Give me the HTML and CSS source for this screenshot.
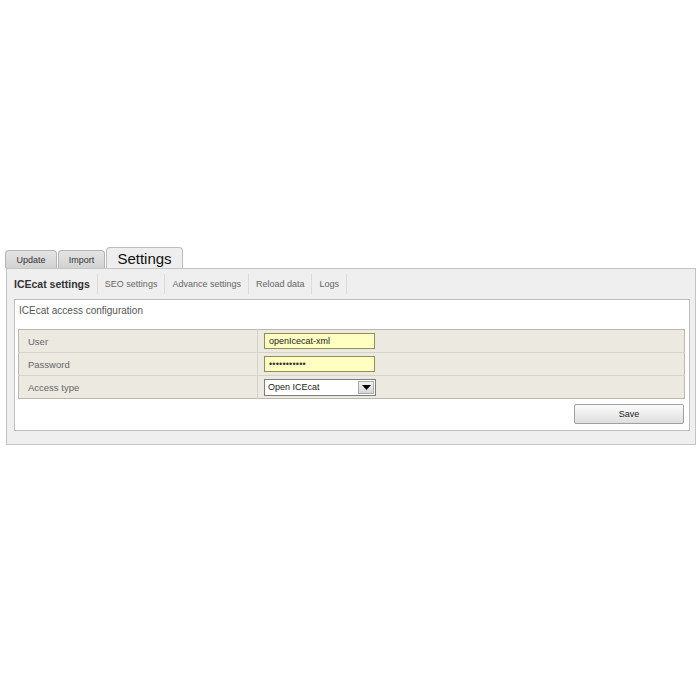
FILE: index.html
```html
<!DOCTYPE html>
<html>
<head>
<meta charset="utf-8">
<link rel="stylesheet" href="styles.css">
</head>
<body>
<div class="page">
  <div class="tabs">
    <div class="tab tab-update">Update</div>
    <div class="tab tab-import">Import</div>
    <div class="tab tab-active">Settings</div>
  </div>
  <div class="panel">
    <div class="subtabs">
      <div class="subtab subtab-active">ICEcat settings</div>
      <div class="subtab">SEO settings</div>
      <div class="subtab">Advance settings</div>
      <div class="subtab">Reload data</div>
      <div class="subtab">Logs</div>
    </div>
    <div class="box">
      <div class="box-title">ICEcat access configuration</div>
      <table class="form-table">
        <tr>
          <td class="label">User</td>
          <td class="field"><div class="input">openIcecat-xml</div></td>
        </tr>
        <tr>
          <td class="label">Password</td>
          <td class="field"><div class="input password">•••••••••••</div></td>
        </tr>
        <tr>
          <td class="label">Access type</td>
          <td class="field">
            <div class="select">
              <span class="select-text">Open ICEcat</span>
              <span class="select-btn"><svg width="9" height="5" viewBox="0 0 9 5"><polygon points="0,0 9,0 4.5,5" fill="#000"/></svg></span>
            </div>
          </td>
        </tr>
      </table>
      <div class="actions">
        <div class="btn">Save</div>
      </div>
    </div>
  </div>
</div>
</body>
</html>
```

FILE: styles.css
```css
html, body {
  margin: 0;
  padding: 0;
  background: #fff;
}
body {
  font-family: "Liberation Sans", Arial, sans-serif;
  color: #333;
}
.page {
  padding: 247px 0 0 5px;
}
.tabs {
  display: flex;
  align-items: flex-end;
  height: 21px;
}
.tab {
  box-sizing: border-box;
  height: 18px;
  border: 1px solid #b4b4b4;
  border-bottom: none;
  border-radius: 4px 4px 0 0;
  background: linear-gradient(#e4e4e4, #d2d2d2);
  font-size: 9px;
  color: #333;
  text-align: center;
  line-height: 19px;
  margin-right: 1px;
}
.tab-update { width: 52px; }
.tab-import { width: 47px; }
.tab-active {
  width: 77px;
  height: 21px;
  background: #eeeeee;
  border-color: #bcbcbc;
  font-size: 15px;
  line-height: 22px;
  color: #111;
}
.panel {
  box-sizing: border-box;
  width: 690px;
  margin-left: 1px;
  border: 1px solid #c4c4c4;
  background: #efefef;
  padding: 0 5px 13px 7px;
}
.subtabs {
  display: flex;
  align-items: center;
  height: 30px;
}
.subtab {
  font-size: 9px;
  color: #666;
  padding: 0 7px;
  height: 20px;
  line-height: 20px;
  border-right: 1px solid #dcdcdc;
}
.subtab-active {
  padding-left: 0;
  font-size: 10.5px;
  font-weight: bold;
  color: #333;
}
.box {
  background: #fff;
  border: 1px solid #bdbdbd;
  padding: 0 4px 6px 3px;
}
.box-title {
  font-size: 10px;
  color: #555;
  height: 29px;
  line-height: 22px;
  padding-left: 1px;
}
.form-table {
  width: 100%;
  border-collapse: collapse;
  background: #ebe9e0;
  border: 1px solid #b9b7ae;
}
.form-table td {
  border-top: 1px solid #d6d4ca;
  padding: 0;
  height: 22px;
}
.form-table tr:first-child td {
  border-top: none;
}
.label {
  width: 239px;
  padding-left: 9px !important;
  font-size: 9.5px;
  color: #666;
  border-right: 1px solid #d6d4ca;
  box-sizing: border-box;
}
.field {
  padding-left: 6px !important;
}
.input {
  box-sizing: border-box;
  width: 111px;
  height: 16px;
  border: 1px solid #8f8f5a;
  background: #ffffc2;
  font-size: 9px;
  line-height: 14px;
  padding-left: 4px;
  color: #222;
}
.password {
  letter-spacing: 0.2px;
  color: #333;
}
.select {
  box-sizing: border-box;
  width: 112px;
  height: 17px;
  border: 1px solid #7d7d7d;
  background: #fff;
  display: flex;
  align-items: stretch;
}
.select-text {
  flex: 1;
  font-size: 9px;
  line-height: 15px;
  padding-left: 3px;
  color: #222;
}
.select-btn {
  width: 16px;
  margin: 1px;
  box-sizing: border-box;
  border: 1px solid #aaa;
  background: linear-gradient(#f2f2f2, #d6d6d6);
  display: flex;
  align-items: center;
  justify-content: center;
}
.actions {
  display: flex;
  justify-content: flex-end;
  padding: 5px 1px 0 0;
}
.btn {
  box-sizing: border-box;
  width: 110px;
  height: 20px;
  border: 1px solid #a0a0a0;
  border-radius: 2px;
  background: linear-gradient(#fbfbfb, #dedede);
  font-size: 9px;
  line-height: 18px;
  text-align: center;
  color: #222;
}
```
